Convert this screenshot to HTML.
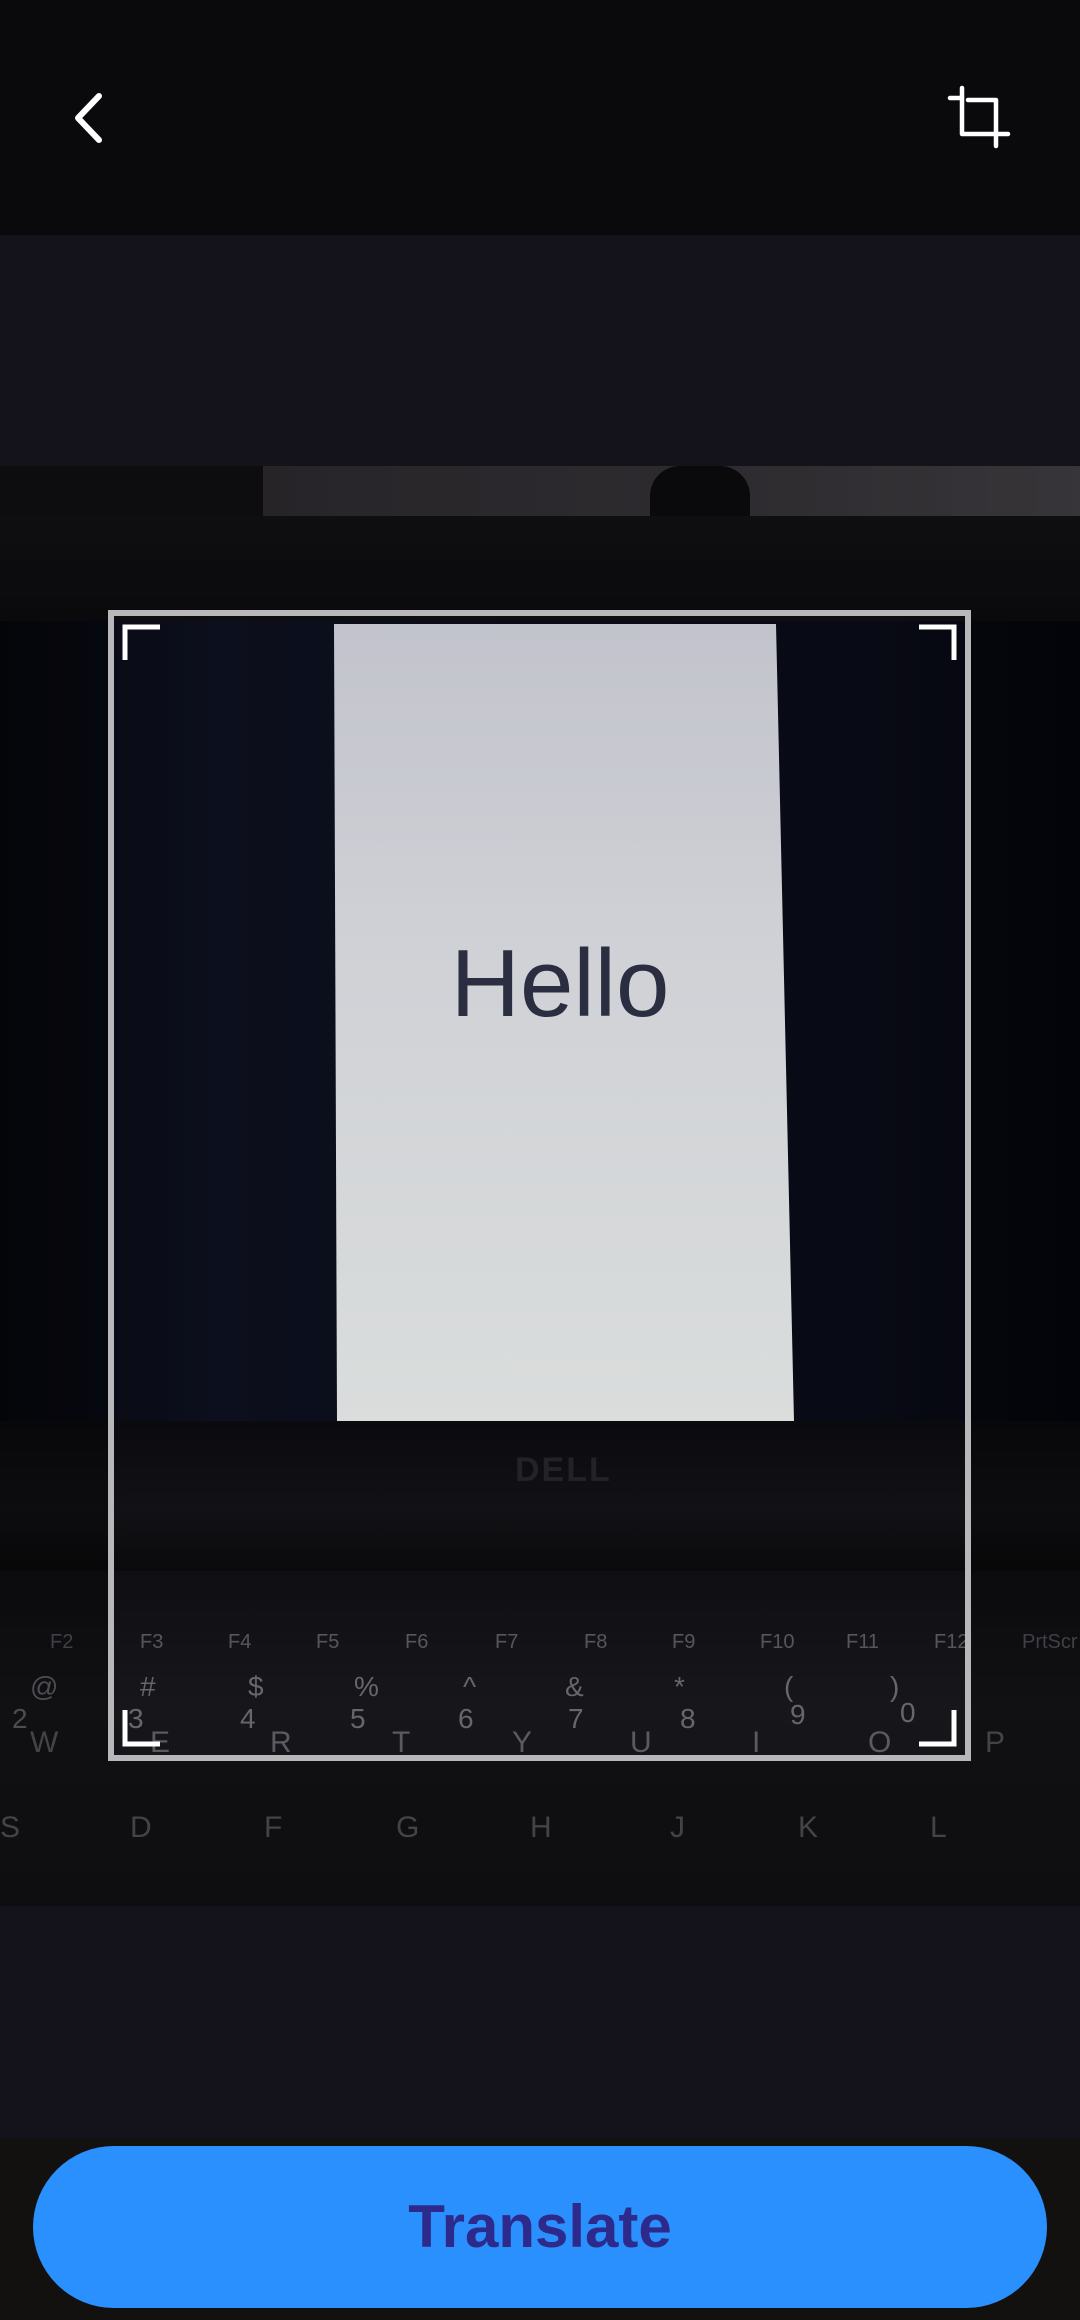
<!DOCTYPE html>
<html><head><meta charset="utf-8"><style>
*{margin:0;padding:0;box-sizing:border-box}
body{width:1080px;height:2320px;background:#14121a;position:relative;overflow:hidden;font-family:"Liberation Sans",sans-serif}
.abs{position:absolute}
</style></head><body>
<div class="abs" style="left:0;top:0;width:1080px;height:235px;background:#0a0a0d"></div>
<svg class="abs" style="left:66px;top:92px" width="46" height="52" viewBox="0 0 46 52"><path d="M33 4 L12 26 L33 48" fill="none" stroke="#fff" stroke-width="6" stroke-linecap="round" stroke-linejoin="round"/></svg>
<svg class="abs" style="left:946px;top:84px" width="66" height="66" viewBox="0 0 66 66"><path d="M4 14 H16 V50 H62 M50 62 V16 H22" fill="none" stroke="#fff" stroke-width="4.5" stroke-linecap="round" stroke-linejoin="round"/><path d="M16 4 V14" stroke="#fff" stroke-width="4.5" stroke-linecap="round"/></svg>

<div class="abs" style="left:0;top:466px;width:1080px;height:1440px;background:#08080c;overflow:hidden">
  <div class="abs" style="left:0;top:0;width:263px;height:50px;background:#121216"></div>
  <div class="abs" style="left:263px;top:0;width:817px;height:50px;background:linear-gradient(90deg,#343136,#3e3b40 60%,#4a474c)"></div>
  <div class="abs" style="left:650px;top:0;width:100px;height:50px;background:#0e0e11;border-radius:30px 30px 0 0"></div>
  <div class="abs" style="left:0;top:50px;width:1080px;height:105px;background:linear-gradient(#141417,#0e0e11)"></div>
  <div class="abs" style="left:0;top:155px;width:1080px;height:800px;background:linear-gradient(90deg,#06070d,#0c0f1d 20%,#090b18 50%,#080a15 80%,#05060c)"></div>
  <div class="abs" style="left:334px;top:158px;width:460px;height:797px;background:linear-gradient(#c2c3cc,#cfd1d6 40%,#dadddc 100%);clip-path:polygon(0 0,442px 0,460px 100%,3px 100%)"></div>
  <div class="abs" style="left:430px;top:470px;width:260px;text-align:center;font-size:96px;color:#2a2e40;line-height:1">Hello</div>
  <div class="abs" style="left:0;top:955px;width:1080px;height:150px;background:linear-gradient(#0b0a0e,#121115 60%,#0a0a0c)"></div>
  <div class="abs" style="left:515px;top:985px;font-size:34px;font-weight:bold;color:#232226;letter-spacing:2px">DELL</div>
  <div class="abs" style="left:0;top:1105px;width:1080px;height:335px;background:linear-gradient(#0f0f13,#17171b 40%,#131316)"></div>
  <div class="abs" style="left:0;top:1165px;width:1080px;font-size:20px;color:#56565c;white-space:nowrap">
    <span class="abs" style="left:50px;top:0">F2</span><span class="abs" style="left:140px">F3</span><span class="abs" style="left:228px">F4</span><span class="abs" style="left:316px">F5</span><span class="abs" style="left:405px">F6</span><span class="abs" style="left:495px">F7</span><span class="abs" style="left:584px">F8</span><span class="abs" style="left:672px">F9</span><span class="abs" style="left:760px">F10</span><span class="abs" style="left:846px">F11</span><span class="abs" style="left:934px">F12</span><span class="abs" style="left:1022px">PrtScr</span>
  </div>
  <div class="abs" style="left:0;top:1195px;width:1080px;font-size:28px;color:#66666c;white-space:nowrap">
    <span class="abs" style="left:30px;top:10px">@</span><span class="abs" style="left:140px;top:10px">#</span><span class="abs" style="left:248px;top:10px">$</span><span class="abs" style="left:354px;top:10px">%</span><span class="abs" style="left:463px;top:10px">^</span><span class="abs" style="left:565px;top:10px">&amp;</span><span class="abs" style="left:674px;top:10px">*</span><span class="abs" style="left:784px;top:10px">(</span><span class="abs" style="left:890px;top:10px">)</span>
    <span class="abs" style="left:12px;top:42px">2</span><span class="abs" style="left:128px;top:42px">3</span><span class="abs" style="left:240px;top:42px">4</span><span class="abs" style="left:350px;top:42px">5</span><span class="abs" style="left:458px;top:42px">6</span><span class="abs" style="left:568px;top:42px">7</span><span class="abs" style="left:680px;top:42px">8</span><span class="abs" style="left:790px;top:38px">9</span><span class="abs" style="left:900px;top:36px">0</span>
  </div>
  <div class="abs" style="left:0;top:1260px;width:1080px;font-size:30px;color:#5a5a60;white-space:nowrap">
    <span class="abs" style="left:30px">W</span><span class="abs" style="left:150px">E</span><span class="abs" style="left:270px">R</span><span class="abs" style="left:392px">T</span><span class="abs" style="left:512px">Y</span><span class="abs" style="left:630px">U</span><span class="abs" style="left:752px">I</span><span class="abs" style="left:868px">O</span><span class="abs" style="left:985px">P</span>
    <span class="abs" style="left:0;top:85px">S</span><span class="abs" style="left:130px;top:85px">D</span><span class="abs" style="left:264px;top:85px">F</span><span class="abs" style="left:396px;top:85px">G</span><span class="abs" style="left:530px;top:85px">H</span><span class="abs" style="left:670px;top:85px">J</span><span class="abs" style="left:798px;top:85px">K</span><span class="abs" style="left:930px;top:85px">L</span>
  </div>
  <div class="abs" style="left:0;top:0;width:1080px;height:1440px;background:rgba(0,0,0,0.25);clip-path:polygon(0 0,1080px 0,1080px 1440px,0 1440px,0 144px,108px 144px,108px 1295px,971px 1295px,971px 144px,0 144px)"></div>
</div>

<div class="abs" style="left:108px;top:610px;width:863px;height:1151px;border:6px solid #b8b8ba"></div>
<svg class="abs" style="left:108px;top:610px" width="863" height="1151">
  <g fill="none" stroke="#fff" stroke-width="5">
    <path d="M17 50 V17 H52"/><path d="M811 17 H846 V50"/><path d="M17 1100 V1134 H52"/><path d="M811 1134 H846 V1100"/>
  </g>
</svg>

<div class="abs" style="left:0;top:2138px;width:1080px;height:182px;background:#131110"></div>
<div class="abs" style="left:33px;top:2146px;width:1014px;height:162px;border-radius:81px;background:#2a90fe;text-align:center;line-height:162px;font-size:60px;font-weight:bold;color:#2e2a8c">Translate</div>
</body></html>
